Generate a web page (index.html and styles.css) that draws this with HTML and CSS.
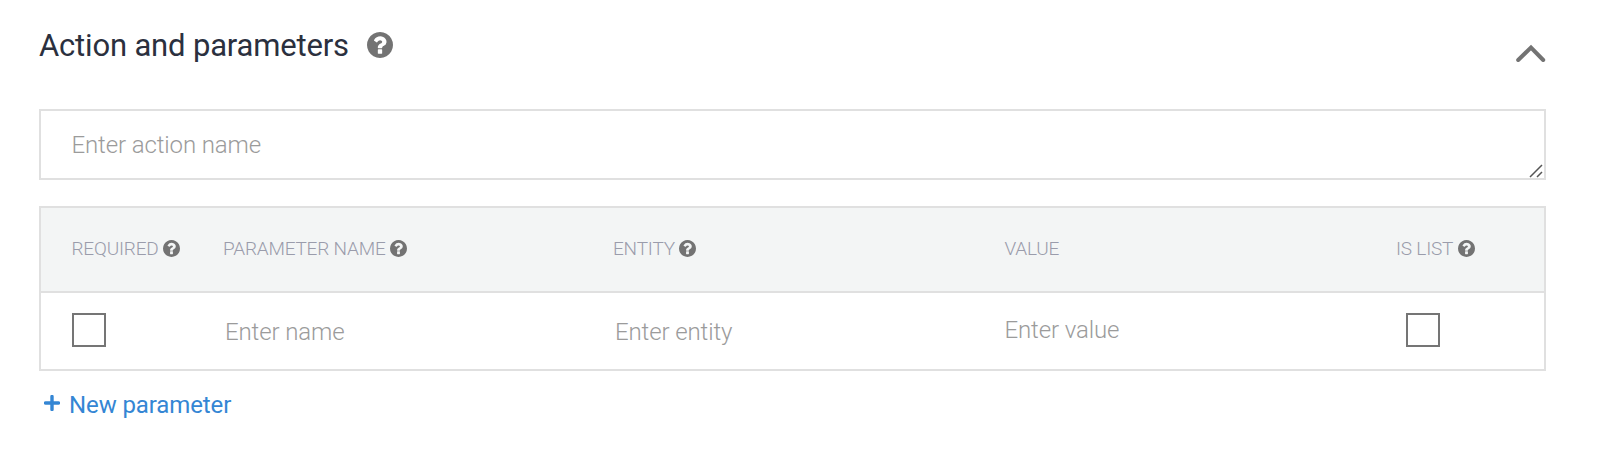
FILE: index.html
```html
<!DOCTYPE html>
<html lang="en">
<head>
<meta charset="utf-8">
<title>Action and parameters</title>
<link rel="stylesheet" href="styles.css">
</head>
<body>
<svg class="defs" width="0" height="0" aria-hidden="true">
  <symbol id="help" viewBox="128 128 1536 1536"><path d="M1024 1376v-192q0-14-9-23t-23-9h-192q-14 0-23 9t-9 23v192q0 14 9 23t23 9h192q14 0 23-9t9-23zm256-672q0-88-55.500-163t-138.500-116-170-41q-243 0-371 213-15 24 8 42l132 100q7 6 19 6 16 0 25-12 53-68 86-92 34-24 86-24 48 0 85.500 26t37.500 59q0 38-20 61t-68 45q-63 28-115.500 86.500t-52.500 125.500v36q0 14 9 23t23 9h192q14 0 23-9t9-23q0-19 21.500-49.500t54.500-49.500q32-18 49-28.500t46-35 44.500-48 28-60.500 12.500-81zm384 192q0 209-103 385.500t-279.500 279.500-385.500 103-385.500-103-279.500-279.500-103-385.500 103-385.500 279.500-279.500 385.500-103 385.500 103 279.500 279.500 103 385.500z"/></symbol>
</svg>
<main class="panel">
  <header class="panel-header">
    <h1 class="title">Action and parameters</h1>
    <svg class="help help-large"><use href="#help"/></svg>
    <svg class="chevron" viewBox="0 0 30 18"><path d="M2.200 16 15 3.500 27.200 16"/></svg>
  </header>
  <div class="action-field">
    <span class="placeholder">Enter action name</span>
    <svg class="grip" viewBox="0 0 14 14"><path d="M1 13 13 1M8 13 13 8"/></svg>
  </div>
  <section class="table">
    <div class="row head">
      <div class="cell required">REQUIRED<svg class="help"><use href="#help"/></svg></div>
      <div class="cell">PARAMETER NAME<svg class="help"><use href="#help"/></svg></div>
      <div class="cell">ENTITY<svg class="help"><use href="#help"/></svg></div>
      <div class="cell">VALUE</div>
      <div class="cell">IS LIST<svg class="help"><use href="#help"/></svg></div>
    </div>
    <div class="row body">
      <div class="cell required"><span class="checkbox"></span></div>
      <div class="cell placeholder input">Enter name</div>
      <div class="cell placeholder input">Enter entity</div>
      <div class="cell placeholder value">Enter value</div>
      <div class="cell list"><span class="checkbox"></span></div>
    </div>
  </section>
  <a class="new-parameter"><svg class="plus" viewBox="0 0 16 16"><path d="M8 1.500v13M1.500 8h13"/></svg>New parameter</a>
</main>
</body>
</html>
```
FILE: styles.css
```css
* { box-sizing: border-box; }
body {
  margin: 0;
  background: #fff;
  font-family: Roboto, "Liberation Sans", sans-serif;
}
.defs { display: none; }
.panel {
  display: flex;
  flex-direction: column;
  padding: 24px 54px 0 39px;
}
.panel-header {
  display: flex;
  align-items: flex-start;
  height: 85px;
}
.title {
  margin: 2px 0 0;
  font-size: 31px;
  line-height: 40px;
  font-weight: 400;
  letter-spacing: -0.17px;
  color: #2b303e;
}
.help {
  flex: none;
  width: 17px;
  height: 17px;
  margin-left: 4.5px;
  fill: #737373;
}
.help-large {
  width: 26px;
  height: 26px;
  margin: 8px 0 0 18px;
}
.chevron {
  width: 30px;
  height: 18px;
  margin: 20px 0 0 auto;
  fill: none;
  stroke: #737373;
  stroke-width: 4;
  stroke-linecap: round;
}
.action-field {
  position: relative;
  height: 71px;
  padding: 1px 30.5px 0;
  border: 2px solid #e0e0e0;
  line-height: 67px;
}
.placeholder {
  font-size: 24px;
  font-weight: 300;
  letter-spacing: -0.12px;
  color: #9b9b9b;
}
.grip {
  position: absolute;
  right: 1px;
  bottom: 0;
  width: 14px;
  height: 14px;
  fill: none;
  stroke: #555;
  stroke-width: 1.5;
}
.table {
  margin-top: 26px;
  border: 2px solid #e0e0e0;
}
.row {
  display: grid;
  grid-template-columns: 152px 390px 391.5px 391.5px 1fr;
  padding-left: 30px;
}
.cell {
  display: flex;
  align-items: center;
}
.required { padding-left: 0.5px; }
.head {
  height: 85px;
  padding-bottom: 3px;
  border-bottom: 2px solid #e0e0e0;
  background: #f3f5f5;
  color: #9a9cab;
  font-size: 19px;
  font-weight: 300;
  letter-spacing: -0.2px;
}
.body { height: 76px; }
.input { padding: 1px 0 0 2px; }
.value { padding-bottom: 2px; }
.list { padding-left: 10px; }
.checkbox {
  width: 34px;
  height: 34px;
  margin-bottom: 2px;
  border: 2px solid #757575;
}
.new-parameter {
  display: flex;
  align-items: flex-start;
  margin: 19px 0 0 4px;
  color: #3486d4;
  font-size: 24px;
  letter-spacing: -0.1px;
  line-height: 30px;
}
.plus {
  width: 16px;
  height: 16px;
  margin: 5px 9.5px 0 0.5px;
  stroke: currentColor;
  stroke-width: 3.4;
  stroke-linecap: round;
}
```
